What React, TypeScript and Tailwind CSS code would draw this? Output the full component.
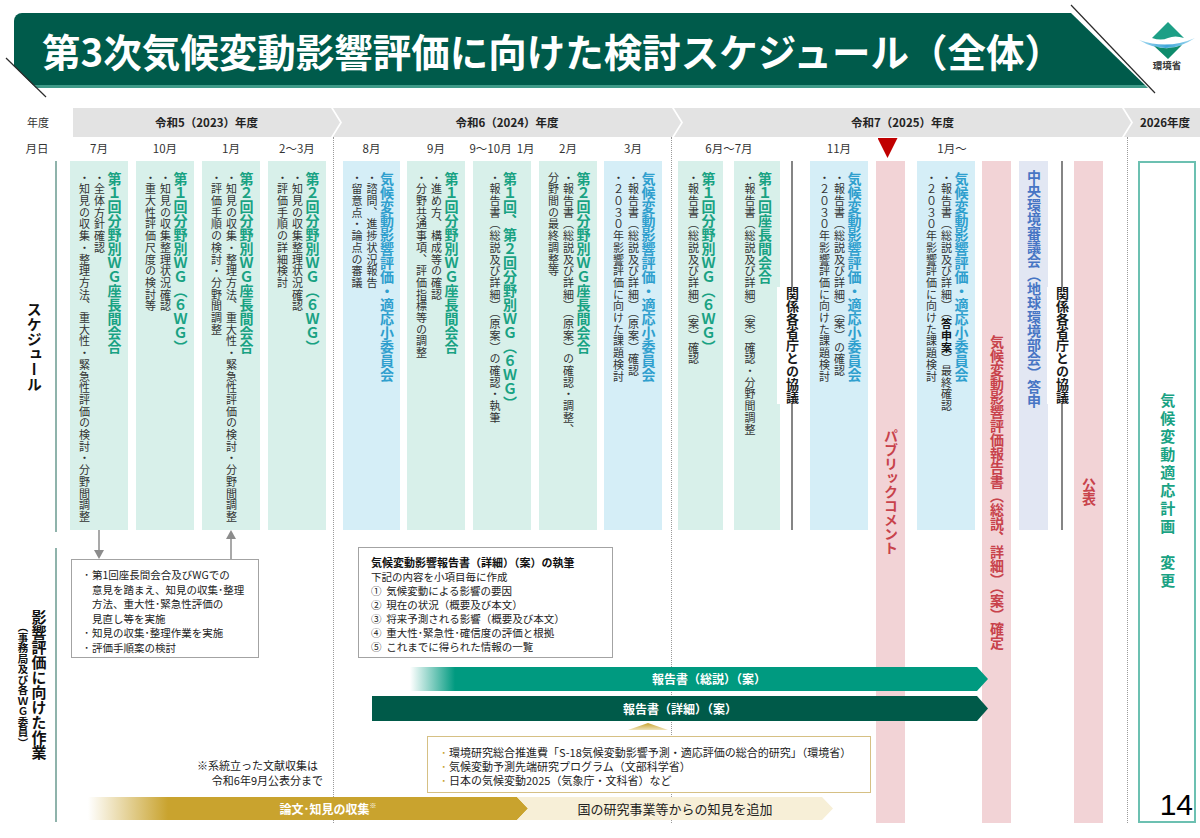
import React from 'react';

const jp = "font-['Noto_Sans_CJK_JP','Noto_Sans',sans-serif]";
const vert = '[writing-mode:vertical-rl]';
const tip = '[clip-path:polygon(0_0,calc(100%_-_9px)_0,100%_50%,calc(100%_-_9px)_100%,0_100%)]';
const notchTip = '[clip-path:polygon(0_0,calc(100%_-_9px)_0,100%_50%,calc(100%_-_9px)_100%,0_100%,9px_50%)]';
const notch = '[clip-path:polygon(0_0,100%_0,100%_100%,0_100%,9px_50%)]';
const arrow = '[clip-path:polygon(0_0,calc(100%_-_11px)_0,100%_50%,calc(100%_-_11px)_100%,0_100%)]';
const arrowNotch = '[clip-path:polygon(0_0,calc(100%_-_11px)_0,100%_50%,calc(100%_-_11px)_100%,0_100%,11px_50%)]';

function Month({ children, className = '' }: { children?: React.ReactNode; className?: string }) {
  return (
    <div className={`h-[24px] flex items-center justify-center whitespace-nowrap text-[11.5px] text-[#333] ${className}`}>
      {children}
    </div>
  );
}

// 縦書きの予定ボックス
function Box({ w, blue, children }: { w: string; blue?: boolean; children: React.ReactNode }) {
  return (
    <div className={`h-[369px] ${w} ${blue ? 'bg-[#d5eef7]' : 'bg-[#d8f0ea]'} flex justify-center pt-[11px]`}>
      <div className={`${vert} h-full`}>{children}</div>
    </div>
  );
}

function T({ blue, children }: { blue?: boolean; children: React.ReactNode }) {
  return (
    <div className={`text-[14px] leading-[15px] font-bold ${blue ? 'text-[#2f9fce]' : 'text-[#19a283]'}`}>
      {children}
    </div>
  );
}

function L({ children }: { children: React.ReactNode }) {
  return <div className="text-[11px] leading-[15px] tracking-[0.7px] text-[#333]">{children}</div>;
}

function Pink({ children }: { children: React.ReactNode }) {
  return (
    <div className="h-[662px] w-[29px] bg-[#f2d3d6] flex items-center justify-center">
      <span className={`${vert} text-[14px] font-bold text-[#c8424b]`}>{children}</span>
    </div>
  );
}

function Talks() {
  return (
    <div className="h-[369px] w-[24px] flex items-center justify-center bg-[linear-gradient(#858585,#858585)] bg-no-repeat bg-center bg-[length:2px_100%]">
      <div className={`${vert} bg-white py-[7px] text-[13px] leading-[16px] font-bold text-[#1a1a1a]`}>関係各省庁との協議</div>
    </div>
  );
}

function Dotted() {
  return <div className="w-0 h-[686px] border-l border-dotted border-[#9a9a9a]" />;
}

function Header() {
  return (
    <div className="relative h-[108px]">
      <div className="pt-[13px] pl-[14px]">
        <div className="w-[1134px] h-[75px] rounded-tl-[8px] bg-[linear-gradient(180deg,#005b4b_0px,#005b4b_72px,#3f9a88_72px)] [clip-path:polygon(0_0,1057px_0,100%_100%,22px_100%,0_53px)] flex items-center pl-[28px]">
          <h1 className="text-white text-[38.5px] font-bold leading-none">
            第3次気候変動影響評価に向けた検討スケジュール（全体）
          </h1>
        </div>
      </div>
      <svg className="absolute left-0 top-0" width="1200" height="108">
        <line x1="6" y1="58" x2="46" y2="97" stroke="#2b2b2b" strokeWidth="1.2" />
        <line x1="1071" y1="5" x2="1155" y2="93" stroke="#2b2b2b" strokeWidth="1.2" />
      </svg>
      <div className="absolute left-[1136px] top-[19px] w-[62px] flex flex-col items-center">
        <svg width="60" height="42" viewBox="0 0 60 42">
          <defs>
            <linearGradient id="sw" x1="0" y1="0" x2="1" y2="0">
              <stop offset="0" stopColor="#a8dbf0" />
              <stop offset="0.5" stopColor="#3ea7da" />
              <stop offset="1" stopColor="#a8dbf0" />
            </linearGradient>
          </defs>
          <path d="M31,3 L47,19 Q38,16 31,19 Q24,22 15,19 Z" fill="#1d9f86" />
          <path d="M2,21 Q30,38 58,19 Q31,31 2,21 Z" fill="url(#sw)" />
          <path d="M17,27 Q31,32 45,26 L31,40 Z" fill="#0e8b6c" />
        </svg>
        <div className="text-[9.5px] font-bold leading-none text-[#333]">環境省</div>
      </div>
    </div>
  );
}

function FyRow() {
  const seg = 'h-full bg-[#e3e3e3] flex items-center justify-center text-[11.5px] font-bold text-[#222] whitespace-nowrap';
  return (
    <div className="flex h-[29px] items-center">
      <div className="w-[73px] pl-[27px] text-[11px] text-[#333]">年度</div>
      <div className={`${seg} w-[267px] ${tip}`}>令和5（2023）年度</div>
      <div className={`${seg} -ml-[7px] w-[348px] ${notchTip}`}>令和6（2024）年度</div>
      <div className={`${seg} -ml-[7px] w-[457px] ${notchTip}`}>令和7（2025）年度</div>
      <div className={`${seg} -ml-[7px] w-[76px] pl-[6px] ${notch}`}>2026年度</div>
    </div>
  );
}

function Columns() {
  return (
    <div className="col-start-1 row-start-1 flex h-[701px]">
      {/* 左ラベル */}
      <div className="w-[70px] shrink-0 flex flex-col">
        <Month className="pl-[4px]">月日</Month>
        <div className="h-[371px] flex">
          <div className="w-[55px] flex items-center justify-center pl-[12px]">
            <span className={`${vert} text-[15px] font-bold text-[#111]`}>スケジュール</span>
          </div>
          <div className="w-[2px] bg-[#8fb3ab]" />
        </div>
        <div className="h-[274px] mt-[16px] flex">
          <div className="w-[55px] flex items-center justify-center pl-[8px]">
            <div className={`${vert} text-center text-[#111] font-bold`}>
              <div className="text-[15px] leading-[18px]">影響評価に向けた作業</div>
              <div className="text-[10.5px] leading-[14px]">（事務局及び各ＷＧ委員）</div>
            </div>
          </div>
          <div className="w-[2px] bg-[#8fb3ab]" />
        </div>
      </div>

      {/* 令和5年度 */}
      <div className="w-[58px] shrink-0 flex flex-col">
        <Month>7月</Month>
        <Box w="w-[58px]">
          <T>第１回分野別ＷＧ座長間会合</T>
          <L>・全体方針確認</L>
          <L>・知見の収集・整理方法、重大性・緊急性評価の検討・分野間調整</L>
        </Box>
      </div>
      <div className="w-[58px] shrink-0 flex flex-col ml-[8px]">
        <Month>10月</Month>
        <Box w="w-[58px]">
          <T>第１回分野別ＷＧ（６ＷＧ）</T>
          <L>・知見の収集整理状況確認</L>
          <L>・重大性評価尺度の検討等</L>
        </Box>
      </div>
      <div className="w-[58px] shrink-0 flex flex-col ml-[8px]">
        <Month>1月</Month>
        <Box w="w-[58px]">
          <T>第２回分野別ＷＧ座長間会合</T>
          <L>・知見の収集・整理方法、重大性・緊急性評価の検討・分野間調整</L>
          <L>・評価手順の検討・分野間調整</L>
        </Box>
      </div>
      <div className="w-[58px] shrink-0 flex flex-col ml-[8px]">
        <Month>2～3月</Month>
        <Box w="w-[58px]">
          <T>第２回分野別ＷＧ（６ＷＧ）</T>
          <L>・知見の収集整理状況確認</L>
          <L>・評価手順の詳細検討</L>
        </Box>
      </div>
      <div className="ml-[7px] shrink-0">
        <Dotted />
      </div>

      {/* 令和6年度 */}
      <div className="w-[57px] shrink-0 flex flex-col ml-[9px]">
        <Month>8月</Month>
        <Box w="w-[57px]" blue>
          <T blue>気候変動影響評価・適応小委員会</T>
          <L>・諮問、進捗状況報告</L>
          <L>・留意点・論点の審議</L>
        </Box>
      </div>
      <div className="w-[58px] shrink-0 flex flex-col ml-[7px]">
        <Month>9月</Month>
        <Box w="w-[58px]">
          <T>第１回分野別ＷＧ座長間会合</T>
          <L>・進め方、構成等の確認</L>
          <L>・分野共通事項、評価指標等の調整</L>
        </Box>
      </div>
      <div className="w-[58px] shrink-0 flex flex-col ml-[8px]">
        <Month>
          <span>9～10月</span>
          <span className="ml-[5px]">1月</span>
        </Month>
        <Box w="w-[58px]">
          <T>第１回、第２回分野別ＷＧ（６ＷＧ）</T>
          <L>・報告書（総説及び詳細）（原案）の確認・執筆</L>
        </Box>
      </div>
      <div className="w-[58px] shrink-0 flex flex-col ml-[8px]">
        <Month>2月</Month>
        <Box w="w-[58px]">
          <T>第２回分野別ＷＧ座長間会合</T>
          <L>・報告書（総説及び詳細）（原案）の確認・調整、</L>
          <L>分野間の最終調整等</L>
        </Box>
      </div>
      <div className="w-[58px] shrink-0 flex flex-col ml-[7px]">
        <Month>3月</Month>
        <Box w="w-[58px]" blue>
          <T blue>気候変動影響評価・適応小委員会</T>
          <L>・報告書（総説及び詳細）（原案）確認</L>
          <L>・２０３０年影響評価に向けた課題検討</L>
        </Box>
      </div>
      <div className="ml-[9px] shrink-0">
        <Dotted />
      </div>

      {/* 令和7年度 */}
      <div className="w-[102px] shrink-0 flex flex-col ml-[6px]">
        <Month>6月～7月</Month>
        <div className="flex">
          <Box w="w-[45px]">
            <T>第１回分野別ＷＧ（６ＷＧ）</T>
            <L>・報告書（総説及び詳細）（案）確認</L>
          </Box>
          <div className="ml-[11px]">
            <Box w="w-[46px]">
              <T>第１回座長間会合</T>
              <L>・報告書（総説及び詳細）（案）確認・分野間調整</L>
            </Box>
          </div>
        </div>
      </div>
      <div className="w-[24px] shrink-0 flex flex-col">
        <Month />
        <Talks />
      </div>
      <div className="w-[58px] shrink-0 flex flex-col ml-[6px]">
        <Month>11月</Month>
        <Box w="w-[58px]" blue>
          <T blue>気候変動影響評価・適応小委員会</T>
          <L>・報告書（総説及び詳細）（案）の確認</L>
          <L>・２０３０年影響評価に向けた課題検討</L>
        </Box>
      </div>
      <div className="w-[29px] shrink-0 flex flex-col ml-[8px]">
        <div className="h-[24px] flex justify-center pt-[1px] pr-[6px]">
          <div className="w-[20px] h-[20px] shrink-0 bg-[#c00000] [clip-path:polygon(0_0,100%_0,50%_100%)]" />
        </div>
        <Pink>パブリックコメント</Pink>
      </div>
      <div className="w-[58px] shrink-0 flex flex-col ml-[12px]">
        <Month className="pl-[12px]">1月～</Month>
        <Box w="w-[58px]" blue>
          <T blue>気候変動影響評価・適応小委員会</T>
          <L>
            ・報告書（総説及び詳細）（<b className="font-bold text-[#111]">答申案</b>）最終確認
          </L>
          <L>・２０３０年影響評価に向けた課題検討</L>
        </Box>
      </div>
      <div className="w-[29px] shrink-0 flex flex-col ml-[7px]">
        <Month />
        <Pink>気候変動影響評価報告書（総説、詳細）（案）確定</Pink>
      </div>
      <div className="w-[29px] shrink-0 flex flex-col ml-[8px]">
        <Month />
        <div className="h-[369px] w-[29px] bg-[#e2e7f3] flex justify-center pt-[9px]">
          <span className={`${vert} text-[14px] font-bold text-[#4775c4]`}>中央環境審議会（地球環境部会）答申</span>
        </div>
      </div>
      <div className="w-[24px] shrink-0 flex flex-col ml-[2px]">
        <Month />
        <Talks />
      </div>
      <div className="w-[29px] shrink-0 flex flex-col">
        <Month />
        <Pink>公表</Pink>
      </div>
      <div className="ml-[24px] shrink-0">
        <Dotted />
      </div>

      {/* 2026年度 */}
      <div className="w-[58px] shrink-0 flex flex-col ml-[10px]">
        <Month />
        <div className="h-[662px] w-[58px] border-2 border-[#6cc0b1] grid">
          <div className="col-start-1 row-start-1 flex items-center justify-center">
            <span className={`${vert} text-[15px] tracking-[3px] font-bold text-[#19a283]`}>気候変動適応計画　変更</span>
          </div>
          <div className="col-start-1 row-start-1 self-end justify-self-end mb-[1px] mr-[1px] font-['Liberation_Sans',sans-serif] text-[30px] leading-none text-black">
            14
          </div>
        </div>
      </div>
    </div>
  );
}

function Work() {
  return (
    <div className="col-start-1 row-start-1 pt-[393px] text-[#222]">
      <div className="flex items-start">
        <div className="ml-[71px] w-[188px]">
          <svg width="188" height="29" className="block">
            <line x1="28" y1="0" x2="28" y2="21" stroke="#8c8c8c" strokeWidth="1.5" />
            <polygon points="23,20 33,20 28,29" fill="#8c8c8c" />
            <line x1="160" y1="8" x2="160" y2="29" stroke="#8c8c8c" strokeWidth="1.5" />
            <polygon points="155,9 165,9 160,0" fill="#8c8c8c" />
          </svg>
          <div className="h-[99px] border border-[#a3a3a3] bg-white pl-[12px] pt-[8px] text-[10.5px] leading-[14.5px]">
            <div className="flex">
              <span className="w-[8px] shrink-0">･</span>
              <span>
                第1回座長間会合及びWGでの
                <br />
                意見を踏まえ、知見の収集･整理
                <br />
                方法、重大性･緊急性評価の
                <br />
                見直し等を実施
              </span>
            </div>
            <div className="flex">
              <span className="w-[8px] shrink-0">･</span>
              <span>知見の収集･整理作業を実施</span>
            </div>
            <div className="flex">
              <span className="w-[8px] shrink-0">･</span>
              <span>評価手順案の検討</span>
            </div>
          </div>
        </div>
        <div className="ml-[99px] mt-[17px] w-[255px] h-[111px] border border-[#a3a3a3] bg-white pl-[12px] pt-[7px] text-[10.5px] leading-[14px]">
          <div className="text-[11px] font-bold leading-[15px] text-[#111]">気候変動影響報告書（詳細）（案）の執筆</div>
          <div>下記の内容を小項目毎に作成</div>
          <div>①&nbsp;&nbsp;気候変動による影響の要因</div>
          <div>②&nbsp;&nbsp;現在の状況（概要及び本文）</div>
          <div>③&nbsp;&nbsp;将来予測される影響（概要及び本文）</div>
          <div>④&nbsp;&nbsp;重大性･緊急性･確信度の評価と根拠</div>
          <div>⑤&nbsp;&nbsp;これまでに得られた情報の一覧</div>
        </div>
      </div>

      <div
        className={`mt-[9px] ml-[410px] w-[578px] h-[24px] bg-[linear-gradient(90deg,#ffffff_0px,#009a80_45px)] ${arrow} flex items-center justify-center pl-[20px] text-white text-[12px] font-bold`}
      >
        報告書（総説）（案）
      </div>
      <div
        className={`mt-[5px] ml-[372px] w-[616px] h-[25px] bg-[#005a49] ${arrow} flex items-center justify-center text-white text-[12px] font-bold`}
      >
        報告書（詳細）（案）
      </div>
      <div className="mt-[2px] ml-[628px] w-[40px] h-[7px] bg-[linear-gradient(180deg,#c9a32e,#efe2b8)] [clip-path:polygon(50%_0,100%_100%,0_100%)]" />

      <div className="mt-[6px] flex items-end">
        <div className="w-[323px] mb-[5px] text-right text-[11px] leading-[15px]">
          <div className="mr-[5px]">※系統立った文献収集は</div>
          <div>令和6年9月公表分まで</div>
        </div>
        <div className="ml-[104px] w-[444px] h-[57px] border border-[#d6c084] bg-white pl-[13px] pt-[8px] text-[11px] leading-[14px]">
          <div className="flex">
            <span className="w-[8px] shrink-0 text-[#c9a32e]">･</span>
            <span>環境研究総合推進費「S-18気候変動影響予測・適応評価の総合的研究」（環境省）</span>
          </div>
          <div className="flex">
            <span className="w-[8px] shrink-0 text-[#c9a32e]">･</span>
            <span>気候変動予測先端研究プログラム（文部科学省）</span>
          </div>
          <div className="flex">
            <span className="w-[8px] shrink-0 text-[#c9a32e]">･</span>
            <span>日本の気候変動2025（気象庁・文科省）など</span>
          </div>
        </div>
      </div>

      <div className="mt-[4px] flex h-[23px]">
        <div
          className={`ml-[88px] w-[440px] h-full bg-[linear-gradient(90deg,#ffffff_0px,#c9a32e_80px)] ${arrow} flex items-center justify-center pl-[40px] text-white text-[12px] font-bold`}
        >
          論文･知見の収集<sup className="text-[7px] font-normal">※</sup>
        </div>
        <div
          className={`-ml-[11px] w-[316px] h-full bg-[#f7efd7] ${arrowNotch} flex items-center justify-center text-[13px] text-[#222]`}
        >
          国の研究事業等からの知見を追加
        </div>
      </div>
    </div>
  );
}

export default function App() {
  return (
    <div className={`w-[1200px] h-[838px] bg-white overflow-hidden ${jp}`}>
      <Header />
      <FyRow />
      <div className="grid">
        <Columns />
        <Work />
      </div>
    </div>
  );
}
